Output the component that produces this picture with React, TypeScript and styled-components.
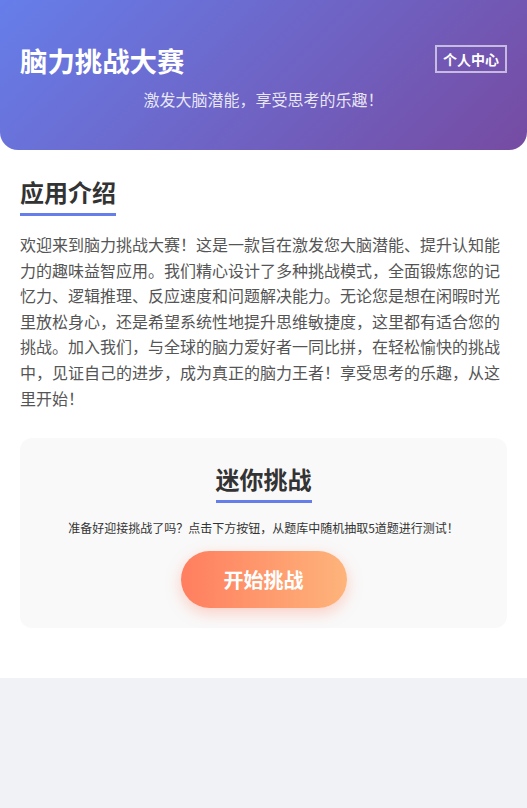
import styled, { createGlobalStyle } from "styled-components";

const GlobalStyle = createGlobalStyle`
  * {
    box-sizing: border-box;
  }
  body {
    margin: 0;
    background: #f0f2f5;
    font-family: "Noto Sans CJK SC", "Noto Sans", sans-serif;
    color: #333;
  }
`;

function App() {
  return (
    <>
      <GlobalStyle />
      <Container>
        <Header>
          <div className="top">
            <h1>脑力挑战大赛</h1>
            <ProfileButton>个人中心</ProfileButton>
          </div>
          <p className="slogan">激发大脑潜能，享受思考的乐趣！</p>
        </Header>
        <Content>
          <SectionTitle>应用介绍</SectionTitle>
          <Intro>
            欢迎来到脑力挑战大赛！这是一款旨在激发您大脑潜能、提升认知能力的趣味益智应用。我们精心设计了多种挑战模式，全面锻炼您的记忆力、逻辑推理、反应速度和问题解决能力。无论您是想在闲暇时光里放松身心，还是希望系统性地提升思维敏捷度，这里都有适合您的挑战。加入我们，与全球的脑力爱好者一同比拼，在轻松愉快的挑战中，见证自己的进步，成为真正的脑力王者！享受思考的乐趣，从这里开始！
          </Intro>
          <ChallengeCard>
            <SectionTitle $center>迷你挑战</SectionTitle>
            <p className="desc">
              准备好迎接挑战了吗？点击下方按钮，从题库中随机抽取5道题进行测试！
            </p>
            <StartButton>开始挑战</StartButton>
          </ChallengeCard>
        </Content>
      </Container>
    </>
  );
}

const Container = styled.div`
  width: 100%;
  background: #fff;
  box-shadow: 0 0 20px rgba(0, 0, 0, 0.08);
`;

const Header = styled.header`
  background: linear-gradient(135deg, #667eea 0%, #764ba2 100%);
  color: #fff;
  padding: 44px 20px 39px;
  border-radius: 0 0 18px 18px;

  .top {
    display: flex;
    justify-content: space-between;
    align-items: center;
  }
  h1 {
    margin: 0;
    font-size: 27.4px;
    line-height: 32px;
    font-weight: 700;
  }
  .slogan {
    margin: 11px 0 0;
    text-align: center;
    font-size: 16px;
    line-height: 24px;
    color: rgba(255, 255, 255, 0.85);
  }
`;

const ProfileButton = styled.button`
  background: transparent;
  border: 2px solid rgba(255, 255, 255, 0.6);
  color: #fff;
  font-family: inherit;
  font-size: 14px;
  font-weight: 700;
  line-height: 18px;
  padding: 3px 6px;
  margin-top: -2px;
`;

const Content = styled.main`
  padding: 26px 20px 50px;
`;

const SectionTitle = styled.h2<{ $center?: boolean }>`
  display: table;
  margin: ${(p) => (p.$center ? "0 auto" : "0")};
  font-size: 24px;
  line-height: 31px;
  font-weight: 700;
  color: #333;
  padding-bottom: 6px;
  border-bottom: 3px solid #667eea;
`;

const Intro = styled.p`
  margin: 16px 0 0;
  font-size: 16px;
  line-height: 25.6px;
  color: #555;
`;

const ChallengeCard = styled.section`
  margin-top: 27px;
  background: #f9f9f9;
  border-radius: 12px;
  padding: 25px 20px 20px;
  text-align: center;

  .desc {
    margin: 16px 0 14px;
    font-size: 12px;
    line-height: 18px;
    color: #333;
  }
`;

const StartButton = styled.button`
  border: none;
  border-radius: 30px;
  padding: 15px 43px;
  background: linear-gradient(90deg, #ff7e5f 0%, #feb47b 100%);
  color: #fff;
  font-family: inherit;
  font-size: 20px;
  line-height: 27px;
  font-weight: 700;
  box-shadow: 0 5px 15px rgba(255, 126, 95, 0.35);
`;

export default App;
